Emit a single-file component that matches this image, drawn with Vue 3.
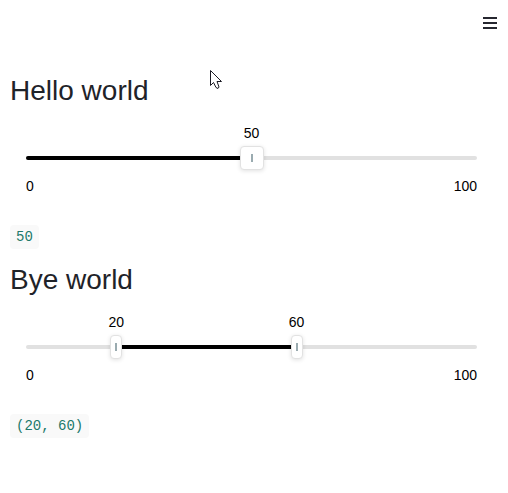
<script setup>
import { ref, computed } from 'vue'

const single = ref(50)
const low = ref(20)
const high = ref(60)
const singleFill = computed(() => ({ width: single.value + '%' }))
const rangeFill = computed(() => ({ left: low.value + '%', width: high.value - low.value + '%' }))
</script>

<template>
  <div class="page">
    <header class="bar">
      <button class="menu" type="button" aria-label="Menu">
        <svg width="14" height="12" viewBox="0 0 14 12" fill="#262730">
          <path d="M0 0H14V2H0ZM0 5H14V7H0ZM0 10H14V12H0Z" />
        </svg>
      </button>
    </header>

    <main>
      <section>
        <h2>Hello world</h2>
        <div class="slider">
          <div class="area">
            <div class="rail"><div class="fill" :style="singleFill"></div></div>
            <output class="value" :style="{ left: single + '%' }">{{ single }}</output>
            <input v-model.number="single" class="wide" type="range" min="0" max="100" aria-label="Hello world" />
            <span class="grip" :style="{ left: single + '%' }"></span>
          </div>
          <div class="ends"><span>0</span><span>100</span></div>
        </div>
        <code>{{ single }}</code>
      </section>

      <section>
        <h2>Bye world</h2>
        <div class="slider">
          <div class="area">
            <div class="rail"><div class="fill" :style="rangeFill"></div></div>
            <output class="value" :style="{ left: low + '%' }">{{ low }}</output>
            <output class="value" :style="{ left: high + '%' }">{{ high }}</output>
            <input v-model.number="low" class="narrow" type="range" min="0" max="100" aria-label="Bye world, lower value" />
            <input v-model.number="high" class="narrow" type="range" min="0" max="100" aria-label="Bye world, upper value" />
            <span class="grip" :style="{ left: low + '%' }"></span>
            <span class="grip" :style="{ left: high + '%' }"></span>
          </div>
          <div class="ends"><span>0</span><span>100</span></div>
        </div>
        <code>({{ low }}, {{ high }})</code>
      </section>
    </main>

    <svg class="pointer" width="14" height="21" viewBox="0 0 14 21">
      <path d="M1.5 1.5V16.5L4.5 13.5L7 18.5L9 19.5L10 18L8 12.5H12.5Z" fill="#fff" stroke="#1b1b24" stroke-width="1" />
    </svg>
  </div>
</template>

<style>
body {
  background: #fff;
}
</style>

<style scoped>
.page {
  position: relative;
  font-family: "Liberation Sans", Arial, sans-serif;
  font-size: 14px;
  line-height: 20px;
  color: #000;
}
.bar {
  display: flex;
  justify-content: flex-end;
  padding: 12px 8px 0;
}
.menu {
  display: flex;
  align-items: center;
  justify-content: center;
  width: 20px;
  height: 22px;
  padding: 0;
  border: 0;
  background: none;
}
main {
  display: flex;
  flex-direction: column;
  gap: 10px;
  padding: 36px 10px 0;
}
h2 {
  margin: 0;
  font-size: 28px;
  font-weight: 400;
  line-height: 42px;
  color: #1f2329;
}
.slider {
  padding: 34px 21px 0 16px;
}
.area {
  position: relative;
  height: 24px;
  display: flex;
  align-items: center;
}
.rail {
  position: relative;
  width: 100%;
  height: 4px;
  border-radius: 2px;
  background: #e1e1e1;
}
.fill {
  position: absolute;
  height: 4px;
  border-radius: 2px;
  background: #000;
}
.value {
  position: absolute;
  bottom: 27px;
  transform: translateX(-50%);
}
input {
  position: absolute;
  top: 0;
  height: 24px;
  margin: 0;
  appearance: none;
  background: none;
  pointer-events: none;
}
input::-webkit-slider-thumb {
  appearance: none;
  height: 24px;
  border: 1px solid #e2e2e2;
  border-radius: 4px;
  background: #fff;
  box-shadow: 0 1px 4px rgba(0, 0, 0, 0.12);
  pointer-events: auto;
}
.wide {
  left: -12px;
  width: calc(100% + 24px);
}
.wide::-webkit-slider-thumb {
  width: 24px;
}
.narrow {
  left: -6px;
  width: calc(100% + 12px);
}
.narrow::-webkit-slider-thumb {
  width: 12px;
}
.grip {
  position: absolute;
  top: 8px;
  width: 2px;
  height: 8px;
  margin-left: -1px;
  background: #9aabb0;
  pointer-events: none;
}
.ends {
  display: flex;
  justify-content: space-between;
  padding-top: 6px;
}
code {
  display: block;
  width: fit-content;
  margin-top: 29px;
  padding: 2px 6px;
  border-radius: 4px;
  background: #f9f9f9;
  color: #217a6b;
  font-family: "Liberation Mono", monospace;
  font-size: 14px;
  line-height: 20px;
}
.pointer {
  position: absolute;
  left: 209px;
  top: 69px;
}
</style>
